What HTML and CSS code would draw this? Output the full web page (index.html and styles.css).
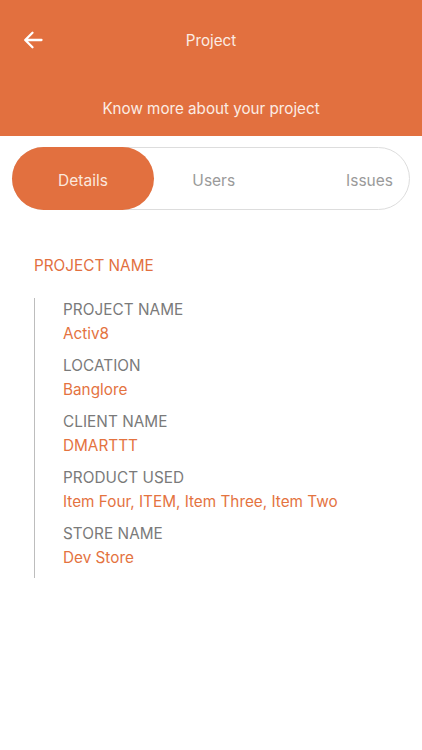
FILE: index.html
```html
<!DOCTYPE html>
<html>
<head>
<meta charset="utf-8">
<link rel="stylesheet" href="styles.css">
</head>
<body>
<div class="header">
  <div class="topbar">
    <svg class="back" width="20" height="18" viewBox="0 0 20 18"><path d="M18.5 9H2.5M9.5 1.8L2.2 9l7.3 7.2" fill="none" stroke="#fff" stroke-width="2.3" stroke-linecap="round" stroke-linejoin="round"/></svg>
    <div class="title">Project</div>
  </div>
  <div class="subtitle">Know more about your project</div>
</div>
<div class="tabs">
  <div class="tab active">Details</div>
  <div class="tab">Users</div>
  <div class="tab">Issues</div>
</div>
<div class="section">
  <div class="section-title">PROJECT NAME</div>
  <div class="fields">
    <div class="field"><div class="label">PROJECT NAME</div><div class="value">Activ8</div></div>
    <div class="field"><div class="label">LOCATION</div><div class="value">Banglore</div></div>
    <div class="field"><div class="label">CLIENT NAME</div><div class="value">DMARTTT</div></div>
    <div class="field"><div class="label">PRODUCT USED</div><div class="value">Item Four, ITEM, Item Three, Item Two</div></div>
    <div class="field"><div class="label">STORE NAME</div><div class="value">Dev Store</div></div>
  </div>
</div>
</body>
</html>
```
FILE: styles.css
```css
html, body {
  margin: 0;
  padding: 0;
  background: #fff;
  font-family: Inter, "Open Sans", sans-serif;
}
body {
  width: 422px;
  height: 750px;
  overflow: hidden;
}
.header {
  background: #E2703F;
  height: 136px;
  color: #fff;
  display: flex;
  flex-direction: column;
}
.topbar {
  position: relative;
  height: 80px;
  display: flex;
  align-items: center;
  justify-content: center;
}
.back {
  position: absolute;
  left: 23px;
  top: 31px;
}
.title {
  font-size: 15.2px;
  color: #fbece4;
}
.subtitle {
  text-align: center;
  font-size: 15.2px;
  color: #fbece4;
  margin-top: 19px;
}
.tabs {
  margin: 11px 12px 0 12px;
  height: 63px;
  box-sizing: border-box;
  border: 1px solid #dddddd;
  border-radius: 32px;
  display: flex;
  align-items: center;
  position: relative;
}
.tab {
  flex: 1;
  text-align: center;
  color: #9a9a9a;
  font-size: 15.5px;
  padding-top: 4px;
}
.tab.active {
  flex: 0 0 142px;
  height: 63px;
  box-sizing: border-box;
  margin: -1px 0 0 -1px;
  border-radius: 32px;
  background: #E2703F;
  color: #fbe8dd;
  display: flex;
  align-items: center;
  justify-content: center;
}
.tab:nth-child(3) {
  text-align: right;
  padding-right: 16px;
}
.section {
  padding: 46px 0 0 34px;
}
.section-title {
  color: #E2703F;
  font-size: 15.3px;
  line-height: 20px;
}
.fields {
  margin-top: 22px;
  border-left: 1.5px solid #bdbdbd;
  padding: 0 0 8px 28px;
  display: flex;
  flex-direction: column;
  gap: 8px;
}
.label {
  color: #7a7a7a;
  font-size: 15.3px;
  line-height: 24px;
  letter-spacing: 0.05px;
}
.value {
  color: #E4733F;
  font-size: 15.3px;
  line-height: 24px;
}
```
